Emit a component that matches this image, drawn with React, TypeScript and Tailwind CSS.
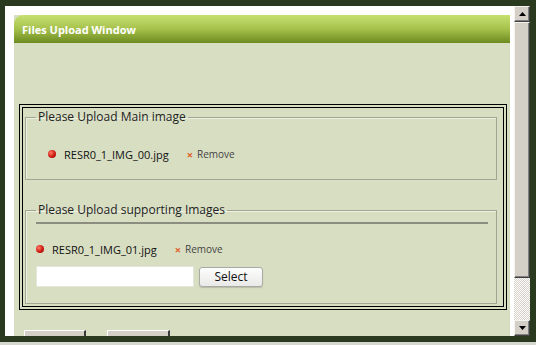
export default function App() {
  return (
    <div className="h-[345px] w-[536px] overflow-hidden bg-[#d6d8d0] font-['Open_Sans',sans-serif]">
      <div className="flex h-[342px] flex-col bg-[#2a3a1f] pb-[6px] pl-[5px] pr-[6px] pt-[6px]">
        <div className="flex min-h-0 flex-1 bg-white">
          <div className="min-w-0 flex-1 overflow-hidden pl-[9px] pr-[4px] pt-[9px]">
            <UploadPanel />
          </div>
          <Scrollbar />
        </div>
      </div>
    </div>
  );
}

function UploadPanel() {
  return (
    <div className="bg-[#d8dec2]">
      <div className="flex h-[28px] items-center rounded-tl-[9px] bg-[linear-gradient(#c6e070,#a6c24c_50%,#6c8a1f)] pl-[8px] pt-[2px]">
        <span className="text-[11px] font-bold text-white">Files Upload Window</span>
      </div>

      <div className="pb-[30px] pl-[5px] pr-[3px] pt-[61px]">
        <div className="border border-black p-[2px]">
          <div className="border border-black px-[2px] pb-[2px] pt-[1px]">
            <fieldset className="w-[472px] border border-[#a2a594] px-[10px] pb-[17px] shadow-[inset_1px_1px_0_#eef1e2]">
              <legend className="px-[2px] text-[12px] leading-[16px] text-[#222]">
                Please Upload Main image
              </legend>
              <div className="pl-[12px] pt-[21px]">
                <FileRow name="RESR0_1_IMG_00.jpg" />
              </div>
            </fieldset>

            <fieldset className="mt-[22px] w-[472px] border border-[#a2a594] pb-[16px] pl-[10px] pr-[8px] shadow-[inset_1px_1px_0_#eef1e2]">
              <legend className="px-[2px] text-[12px] leading-[16px] text-[#222]">
                Please Upload supporting Images
              </legend>
              <div className="mt-[4px] h-[2px] bg-[#8b8d80]" />
              <div className="pt-[17px]">
                <FileRow name="RESR0_1_IMG_01.jpg" />
              </div>
              <div className="mt-[9px] flex items-center gap-[5px]">
                <input
                  type="text"
                  className="h-[21px] w-[158px] border border-[#e4e6da] bg-white px-1 text-[12px] outline-none"
                />
                <button
                  type="button"
                  className="h-[20px] w-[64px] rounded-[3px] border border-[#a9aaa6] bg-[linear-gradient(#fdfdfd,#e9e9e7)] text-[12px] leading-none text-[#111] shadow-[0_1px_1px_rgba(0,0,0,0.15)]"
                >
                  Select
                </button>
              </div>
            </fieldset>
          </div>
        </div>

        <div className="mt-[20px] flex gap-[21px] pl-[5px]">
          <div className="h-[20px] w-[62px] border-l border-t border-r-2 border-l-white border-t-white border-r-[#3a3a3a] bg-[#d4d0c8]" />
          <div className="h-[20px] w-[63px] border-l border-t border-r-2 border-l-white border-t-white border-r-[#3a3a3a] bg-[#d4d0c8]" />
        </div>
      </div>
    </div>
  );
}

function FileRow({ name }: { name: string }) {
  return (
    <div className="flex h-[16px] items-center">
      <span className="h-[8px] w-[8px] rounded-full bg-[radial-gradient(circle_at_35%_35%,#ff7a66,#cc1a10_55%,#8c0a05)]" />
      <span className="ml-[8px] text-[11px] leading-none text-[#111]">{name}</span>
      <span className="ml-[18px] text-[11px] font-bold leading-none text-[#e0622a]">×</span>
      <span className="ml-[4px] text-[10px] leading-none text-[#444]">Remove</span>
    </div>
  );
}

function Scrollbar() {
  return (
    <div className="flex w-[16px] flex-col">
      <ScrollButton up />
      <div className="h-[256px] border border-b-[#404040] border-l-[#f4f3ee] border-r-[#404040] border-t-[#f4f3ee] bg-[#d4d0c8] shadow-[inset_-1px_-1px_0_#808080]" />
      <div className="flex-1 bg-[repeating-conic-gradient(#d4d0c8_0%_25%,#ffffff_0%_50%)] bg-[length:2px_2px]" />
      <ScrollButton />
    </div>
  );
}

function ScrollButton({ up = false }: { up?: boolean }) {
  return (
    <div className="flex h-[16px] items-center justify-center border border-b-[#404040] border-l-[#f4f3ee] border-r-[#404040] border-t-[#f4f3ee] bg-[#d4d0c8] shadow-[inset_-1px_-1px_0_#808080]">
      <svg width="7" height="4" viewBox="0 0 7 4">
        <path d={up ? "M3.5 0L7 4H0z" : "M0 0h7L3.5 4z"} fill="#000" />
      </svg>
    </div>
  );
}
